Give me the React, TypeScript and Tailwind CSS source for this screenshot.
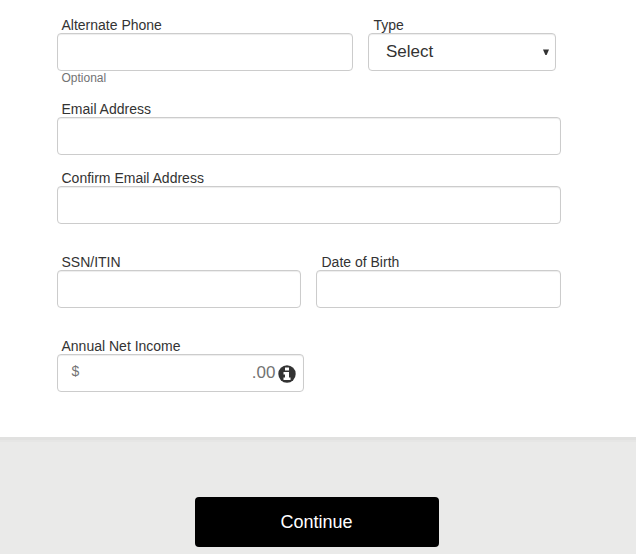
import React from 'react';

const inputClass =
  "block w-full h-[38px] rounded border border-[#ccc] bg-white px-3 text-[17px] text-[#333] shadow-[inset_0_1px_1px_rgba(0,0,0,0.075)] outline-none";

interface FieldProps {
  id: string;
  label: string;
  className: string;
  labelClass?: string;
  hint?: string;
  children?: React.ReactNode;
}

const Field: React.FC<FieldProps> = ({ id, label, className, labelClass = "pl-[4.5px]", hint, children }) => (
  <div className={className}>
    <label htmlFor={id} className={`block h-4 text-sm leading-4 whitespace-nowrap ${labelClass}`}>
      {label}
    </label>
    {children ?? <input id={id} type="text" className={inputClass} />}
    {hint && <span className="block pl-[4.5px] text-xs leading-[14px] text-[#737373]">{hint}</span>}
  </div>
);

const InfoIcon: React.FC = () => (
  <svg viewBox="0 0 18 18" className="mt-px w-[18px] h-[18px] shrink-0" aria-hidden="true">
    <circle cx="9" cy="9" r="8.7" fill="#333" />
    <path d="M7 2.6h4v3H7zM5.5 7H11v5.5h1.5V15h-7v-2.5H7v-3H5.5z" fill="#fff" />
  </svg>
);

const App: React.FC = () => {
  return (
    <div className="flex h-[554px] flex-col overflow-hidden bg-white font-['Liberation_Sans',Arial,sans-serif] text-[#333]">
      <form className="h-[437px] shrink-0 pl-[57px] pt-[17px]">
        <div className="flex h-[84px] gap-[15px]">
          <Field id="alt-phone" label="Alternate Phone" className="w-[296px]" hint="Optional" />
          <Field id="phone-type" label="Type" className="w-[188px]" labelClass="pl-[5.5px]">
            <div className="grid items-center">
              <select
                id="phone-type"
                className="col-start-1 row-start-1 h-[38px] w-full appearance-none rounded border border-[#ccc] bg-white pl-[17px] pb-px text-[17px] text-[#333] shadow-[inset_0_1px_1px_rgba(0,0,0,0.075)]"
              >
                <option>Select</option>
              </select>
              <svg viewBox="0 0 6 6" className="pointer-events-none col-start-1 row-start-1 mr-[7px] h-[6px] w-[6px] justify-self-end">
                <path d="M0 0.5h6L3.6 6H2.4z" fill="#333" />
              </svg>
            </div>
          </Field>
        </div>

        <Field id="email" label="Email Address" className="h-[69px] w-[504px]" />
        <Field id="confirm-email" label="Confirm Email Address" className="h-[84px] w-[504px]" />

        <div className="flex h-[84px] gap-[15px]">
          <Field id="ssn" label="SSN/ITIN" className="w-[244px]" />
          <Field id="dob" label="Date of Birth" className="w-[245px]" labelClass="pl-[5.5px]" />
        </div>

        <Field id="income" label="Annual Net Income" className="w-[247px]">
          <div className="flex h-[38px] items-center rounded border border-[#ccc] pl-[13.5px] pr-[7px] text-[#737373] shadow-[inset_0_1px_1px_rgba(0,0,0,0.075)]">
            <span className="pb-[4px] text-sm">$</span>
            <input id="income" type="text" className="h-full min-w-0 flex-1 px-2 outline-none" />
            <span className="mr-[2.5px] text-[17px]">.00</span>
            <InfoIcon />
          </div>
        </Field>
      </form>

      <footer className="flex flex-1 justify-center border-t-[3px] border-[#e1e1e0] bg-[#eaeae9] pr-[2px] pt-[57px] shadow-[inset_0_2px_0_#e6e6e5]">
        <button type="button" className="h-[50px] w-[244px] rounded bg-black pr-px text-lg text-white">
          Continue
        </button>
      </footer>
    </div>
  );
};

export default App;
